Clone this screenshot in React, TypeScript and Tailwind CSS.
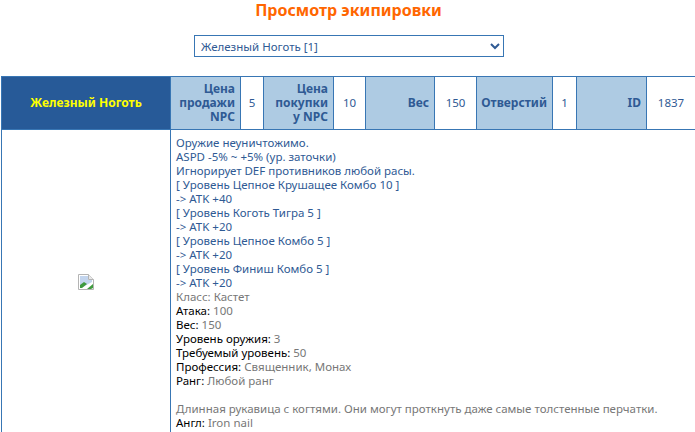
const tdBase = "border border-[#3876b4] p-0";
const head = "bg-[#aecbe3] text-[#2f5a94] text-[12px] font-bold text-right pr-[5px] pl-[2px] " + tdBase;
const val = "bg-white text-center text-[#2f5a94] " + tdBase;

const lines = [
  "Оружие неуничтожимо.",
  "ASPD -5% ~ +5% (ур. заточки)",
  "Игнорирует DEF противников любой расы.",
  "[ Уровень Цепное Крушащее Комбо 10 ]",
  "-> ATK +40",
  "[ Уровень Коготь Тигра 5 ]",
  "-> ATK +20",
  "[ Уровень Цепное Комбо 5 ]",
  "-> ATK +20",
  "[ Уровень Финиш Комбо 5 ]",
  "-> ATK +20",
];

const attrs: [string, string][] = [
  ["Атака:", "100"],
  ["Вес:", "150"],
  ["Уровень оружия:", "3"],
  ["Требуемый уровень:", "50"],
  ["Профессия:", "Священник, Монах"],
  ["Ранг:", "Любой ранг"],
];

function Broken() {
  return (
    <svg width="16" height="16" viewBox="0 0 16 16" className="block">
      <path d="M0.5 0.5H10.5L15.5 5.5V15.5H0.5Z" fill="#fff" stroke="#b4b4b4" />
      <path d="M10.5 0.5V5.5H15.5" fill="#e8e8e8" stroke="#b4b4b4" />
      <path d="M2 2H10V6H14V8L3 14H2Z" fill="#c3d5ee" />
      <path d="M2 14V11L6 8L9 10L4 14Z" fill="#3f9a3f" />
      <path d="M9 15L15 10V14L13 15Z" fill="#3f9a3f" />
    </svg>
  );
}

export default function App() {
  return (
    <div className="w-[695px] h-[432px] overflow-hidden bg-white font-['Noto_Sans',sans-serif] text-[11.5px] leading-[14px]">
      <h1 className="h-[21px] pl-[2px] text-center text-[16px] leading-[21px] font-bold text-[#ff6600]">
        Просмотр экипировки
      </h1>
      <div className="flex justify-center pt-[14px] pl-[3px]">
        <select className="w-[310px] h-[22px] border border-[#3876b4] bg-white text-[#2f5a94] text-[11.5px] pl-[2px]">
          <option>Железный Ноготь [1]</option>
        </select>
      </div>
      <table className="mt-[19px] ml-[1px] w-[695px] border-collapse table-fixed">
        <colgroup>
          <col className="w-[169px]" />
          <col className="w-[70px]" />
          <col className="w-[23px]" />
          <col className="w-[70px]" />
          <col className="w-[32px]" />
          <col className="w-[69px]" />
          <col className="w-[42px]" />
          <col className="w-[76px]" />
          <col className="w-[24px]" />
          <col className="w-[70px]" />
          <col />
        </colgroup>
        <tbody>
          <tr className="h-[53px]">
            <td className={"bg-[#275a98] text-[#ffff00] text-[12px] font-bold text-center " + tdBase}>Железный Ноготь</td>
            <td className={head}>Цена продажи NPC</td>
            <td className={val}>5</td>
            <td className={head}>Цена покупки у NPC</td>
            <td className={val}>10</td>
            <td className={head}>Вес</td>
            <td className={val}>150</td>
            <td className={head}>Отверстий</td>
            <td className={val}>1</td>
            <td className={head}>ID</td>
            <td className={val}>1837</td>
          </tr>
          <tr>
            <td className={tdBase}>
              <div className="flex justify-center"><Broken /></div>
            </td>
            <td colSpan={10} className={"px-[5px] pt-[6px] pb-[4px] text-[#2f5a94] " + tdBase}>
              {lines.map((l) => <div key={l}>{l}</div>)}
              <div className="text-[#777777]">Класс: Кастет</div>
              {attrs.map(([a, b]) => (
                <div key={a}><span className="text-black">{a}</span> <span className="text-[#777777]">{b}</span></div>
              ))}
              <div className="h-[14px]" />
              <div className="text-[#777777]">Длинная рукавица с когтями. Они могут проткнуть даже самые толстенные перчатки.</div>
              <div><span className="text-black">Англ:</span> <span className="text-[#777777]">Iron nail</span></div>
            </td>
          </tr>
        </tbody>
      </table>
    </div>
  );
}
